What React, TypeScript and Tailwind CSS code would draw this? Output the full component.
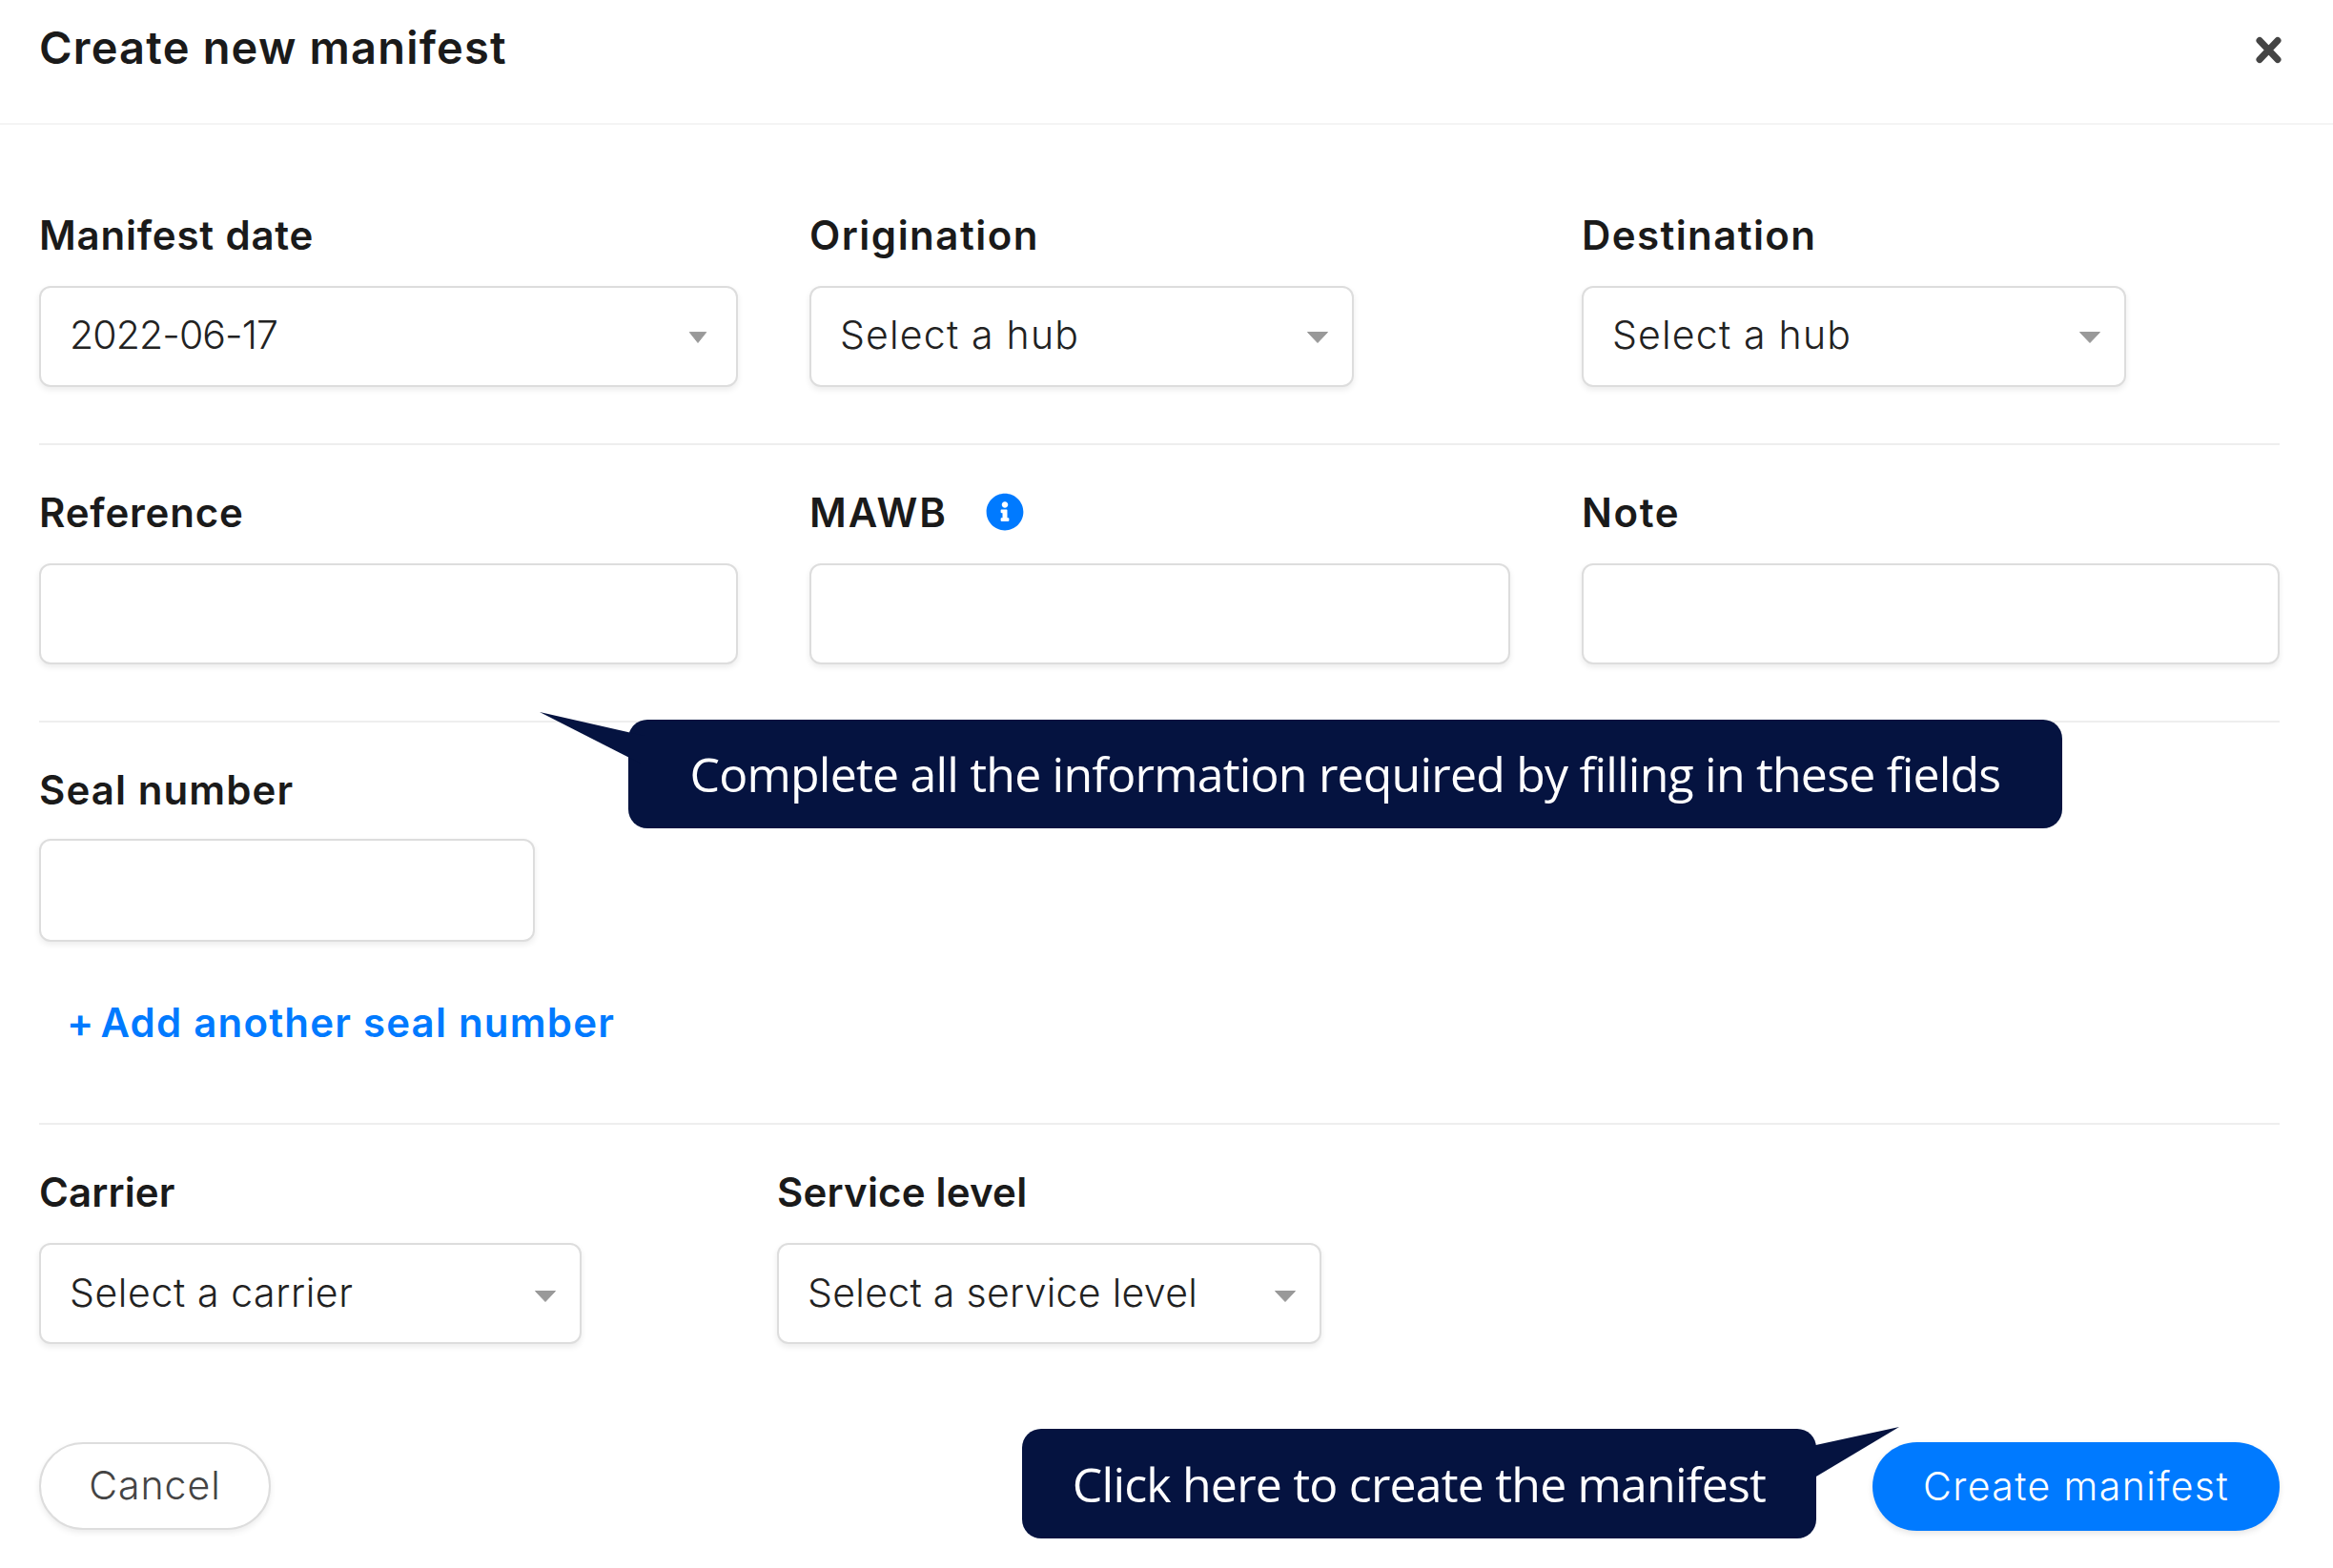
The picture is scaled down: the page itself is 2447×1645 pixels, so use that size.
import { FaInfoCircle } from 'react-icons/fa'

const Caret = ({ className }: { className: string }) => (
  <svg width="24" height="14" viewBox="0 0 24 14" preserveAspectRatio="none" className={`absolute ${className}`}>
    <path d="M1.5 1.5h21L12 12.5z" fill="#999999" stroke="#999999" strokeLinejoin="round" />
  </svg>
)

interface BoxProps {
  text?: string
  caret?: string
  tall?: boolean
  className: string
}

const Box = ({ text, caret, tall, className }: BoxProps) => (
  <div className={`relative ${tall ? 'h-[108px]' : 'h-[106px]'} rounded-[12px] border-2 border-[#dddddd] bg-white shadow-[0_3px_6px_rgba(0,0,0,0.08)] flex items-center pl-[30px] text-[41px] font-light text-[#222222] ${className}`}>
    {text}
    {caret && <Caret className={caret} />}
  </div>
)

const Label = ({ children, className }: { children: React.ReactNode; className?: string }) => (
  <div className={`h-[50px] pb-[2px] flex items-center text-[42px] font-semibold text-[#1a1a1a] ${className ?? 'mb-[28px] tracking-[0.8px]'}`}>{children}</div>
)

const Divider = () => <div className="h-[2px] bg-[#eeeeee]" />

export default function App() {
  return (
    <div className="relative w-[2447px] h-[1645px] overflow-hidden bg-white [font-family:Inter,sans-serif]">
      <header className="h-[131px] border-b-2 border-[#f4f4f4] flex justify-between pl-[41px] pr-[54px] pt-[22px]">
        <h1 className="h-[56px] flex items-center text-[47px] font-semibold text-[#1a1a1a] tracking-[1.2px]">Create new manifest</h1>
        <svg width="27" height="29" viewBox="0 0 27 29" className="mt-[16px]">
          <path d="M4 4.5l19 20M23 4.5l-19 20" stroke="#444444" strokeWidth="7" strokeLinecap="round" />
        </svg>
      </header>
      <main className="pl-[41px] pr-[56px]">
        <section className="pt-[91px] pb-[59px] flex gap-[75px]">
          <div className="w-[733px]">
            <Label>Manifest date</Label>
            <Box text="2022-06-17" caret="top-[45px] right-[30px] w-[20px]" className="w-full pb-[2px] tracking-[-0.9px]" />
          </div>
          <div className="w-[735px]">
            <Label className="mb-[28px] tracking-[1.5px]">Origination</Label>
            <Box text="Select a hub" caret="top-[45px] right-[24px]" className="w-[571px] pb-[2px] tracking-[1.2px]" />
          </div>
          <div>
            <Label className="mb-[28px] tracking-[1.4px]">Destination</Label>
            <Box text="Select a hub" caret="top-[45px] right-[24px]" className="w-[571px] pb-[2px] tracking-[1.2px]" />
          </div>
        </section>
        <Divider />
        <section className="pt-[46px] pb-[59px] flex gap-[75px]">
          <div className="w-[733px]">
            <Label>Reference</Label>
            <Box className="w-full" />
          </div>
          <div className="w-[735px]">
            <Label className="mb-[28px] tracking-[2px]">
              MAWB
              <FaInfoCircle className="ml-[40px] w-[40px] h-[40px] text-[#007aff]" />
            </Label>
            <Box className="w-full" />
          </div>
          <div className="w-[732px]">
            <Label className="mb-[28px] tracking-[1.6px]">Note</Label>
            <Box className="w-full" />
          </div>
        </section>
        <Divider />
        <section className="pt-[46px]">
          <Label className="mb-[26px] tracking-[1.1px]">Seal number</Label>
          <Box tall className="w-[520px]" />
          <div className="mt-[56px] ml-[29px] h-[56px] flex items-center gap-[6px] text-[42px] font-semibold text-[#007aff] tracking-[1.2px]">
            <span>+</span>
            <span>Add another seal number</span>
          </div>
        </section>
        <div className="mt-[78px]">
          <Divider />
        </div>
        <section className="pt-[46px] flex gap-[205px]">
          <div>
            <Label className="mb-[28px] tracking-[0.1px]">Carrier</Label>
            <Box text="Select a carrier" caret="top-[47px] right-[24px]" className="w-[569px] tracking-[0.6px]" />
          </div>
          <div>
            <Label className="mb-[28px] tracking-[0.2px]">Service level</Label>
            <Box text="Select a service level" caret="top-[47px] right-[24px]" className="w-[571px] tracking-[0.3px]" />
          </div>
        </section>
        <footer className="mt-[103px] flex justify-between">
          <button className="w-[243px] h-[92px] rounded-full border-2 border-[#dddddd] bg-white shadow-[0_3px_6px_rgba(0,0,0,0.08)] text-[41px] font-light text-[#444444] tracking-[1px]">Cancel</button>
          <button className="w-[427px] h-[93px] rounded-full bg-[#007aff] shadow-[0_3px_6px_rgba(0,0,0,0.1)] text-[41px] font-light text-white tracking-[1.4px]">Create manifest</button>
        </footer>
      </main>

      {/* annotation callouts laid over the form */}
      <div className="absolute left-[659px] top-[755px] w-[1504px] h-[114px] rounded-[20px] bg-[#051340] flex items-center justify-center text-[50px] text-white tracking-[-0.8px] [font-family:'Open_Sans',sans-serif]">
        Complete all the information required by filling in these fields
      </div>
      <svg className="absolute left-[566px] top-[747px]" width="110" height="60" viewBox="0 0 110 60">
        <path d="M0 0 L110 25 L110 56 Z" fill="#051340" />
      </svg>
      <div className="absolute left-[1072px] top-[1499px] w-[833px] h-[115px] pt-[2px] rounded-[20px] bg-[#051340] flex items-center justify-center text-[50px] text-white tracking-[-0.8px] [font-family:'Open_Sans',sans-serif]">
        Click here to create the manifest
      </div>
      <svg className="absolute left-[1900px] top-[1497px]" width="92" height="56" viewBox="0 0 92 56">
        <path d="M0 20 L92 0 L5 52 L0 52 Z" fill="#051340" />
      </svg>
    </div>
  )
}
